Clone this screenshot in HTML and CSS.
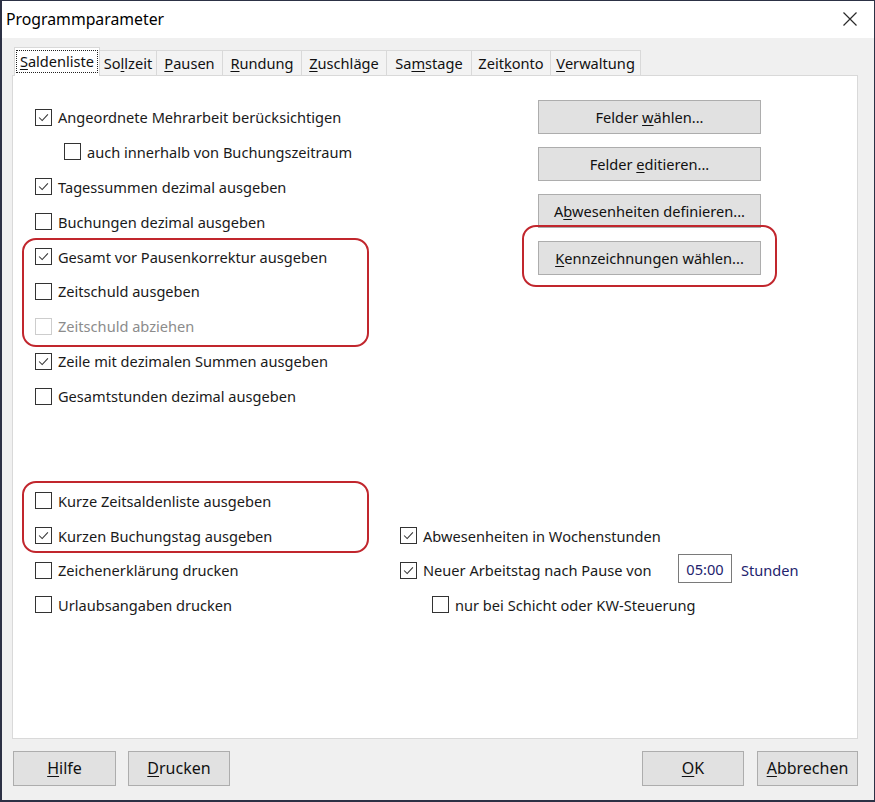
FILE: index.html
```html
<!DOCTYPE html>
<html lang="de">
<head>
<meta charset="utf-8">
<title>Programmparameter</title>
<link rel="stylesheet" href="styles.css">
</head>
<body>
<div class="window">
  <div class="titlebar">
    <span class="title">Programmparameter</span>
    <svg class="close" width="14" height="14" viewBox="0 0 14 14"><path d="M0.5 0.5 L13.5 13.5 M13.5 0.5 L0.5 13.5" stroke="#2a2a2a" stroke-width="1.2" fill="none"/></svg>
  </div>
  <div class="client">
    <div class="tabs">
      <div class="tab tab-active t-saldenliste"><span class="focus"><u>S</u>aldenliste</span></div>
      <div class="tab t-sollzeit">So<u>l</u>lzeit</div>
      <div class="tab t-pausen"><u>P</u>ausen</div>
      <div class="tab t-rundung"><u>R</u>undung</div>
      <div class="tab t-zuschlaege"><u>Z</u>uschläge</div>
      <div class="tab t-samstage">Sa<u>m</u>stage</div>
      <div class="tab t-zeitkonto">Zeit<u>k</u>onto</div>
      <div class="tab t-verwaltung"><u>V</u>erwaltung</div>
    </div>
    <div class="panel">
      <div class="top">
        <div class="list">
          <div class="row"><span class="cb checked"><svg viewBox="0 0 17 17"><path d="M3.5 8.5 L7 12 L13.5 5" /></svg></span>Angeordnete Mehrarbeit berücksichtigen</div>
          <div class="row sub"><span class="cb"></span>auch innerhalb von Buchungszeitraum</div>
          <div class="row"><span class="cb checked"><svg viewBox="0 0 17 17"><path d="M3.5 8.5 L7 12 L13.5 5" /></svg></span>Tagessummen dezimal ausgeben</div>
          <div class="row"><span class="cb"></span>Buchungen dezimal ausgeben</div>
          <div class="mark mark-a">
            <div class="row"><span class="cb checked"><svg viewBox="0 0 17 17"><path d="M3.5 8.5 L7 12 L13.5 5" /></svg></span>Gesamt vor Pausenkorrektur ausgeben</div>
            <div class="row"><span class="cb"></span>Zeitschuld ausgeben</div>
            <div class="row disabled"><span class="cb"></span>Zeitschuld abziehen</div>
          </div>
          <div class="row"><span class="cb checked"><svg viewBox="0 0 17 17"><path d="M3.5 8.5 L7 12 L13.5 5" /></svg></span>Zeile mit dezimalen Summen ausgeben</div>
          <div class="row"><span class="cb"></span>Gesamtstunden dezimal ausgeben</div>
        </div>
        <div class="actions">
          <button class="btn">Felder <u>w</u>ählen...</button>
          <button class="btn">Felder <u>e</u>ditieren...</button>
          <button class="btn">A<u>b</u>wesenheiten definieren...</button>
          <div class="mark mark-btn"><button class="btn"><u>K</u>ennzeichnungen wählen...</button></div>
        </div>
      </div>
      <div class="bottom">
        <div class="list">
          <div class="mark mark-b">
            <div class="row"><span class="cb"></span>Kurze Zeitsaldenliste ausgeben</div>
            <div class="row"><span class="cb checked"><svg viewBox="0 0 17 17"><path d="M3.5 8.5 L7 12 L13.5 5" /></svg></span>Kurzen Buchungstag ausgeben</div>
          </div>
          <div class="row"><span class="cb"></span>Zeichenerklärung drucken</div>
          <div class="row"><span class="cb"></span>Urlaubsangaben drucken</div>
        </div>
        <div class="list">
          <div class="row"></div>
          <div class="row"><span class="cb checked"><svg viewBox="0 0 17 17"><path d="M3.5 8.5 L7 12 L13.5 5" /></svg></span>Abwesenheiten in Wochenstunden</div>
          <div class="row"><span class="cb checked"><svg viewBox="0 0 17 17"><path d="M3.5 8.5 L7 12 L13.5 5" /></svg></span><span class="lbl-fixed">Neuer Arbeitstag nach Pause von</span><span class="field">05:00</span><span class="unit">Stunden</span></div>
          <div class="row sub2"><span class="cb"></span>nur bei Schicht oder KW-Steuerung</div>
        </div>
      </div>
    </div>
    <div class="footer">
      <button class="btn fbtn"><u>H</u>ilfe</button>
      <button class="btn fbtn"><u>D</u>rucken</button>
      <span class="spacer"></span>
      <button class="btn fbtn"><u>O</u>K</button>
      <button class="btn fbtn"><u>A</u>bbrechen</button>
    </div>
  </div>
</div>
</body>
</html>
```
FILE: styles.css
```css
* { box-sizing: border-box; }
html, body { margin: 0; padding: 0; }
body {
  font-family: "Noto Sans", "Open Sans", sans-serif;
  font-size: 14.6px;
  color: #1a1a1a;
  background: #f0f0f0;
}
u { text-decoration: underline; text-underline-offset: 2px; text-decoration-thickness: 1px; }

.window {
  width: 875px;
  height: 802px;
  border: 1px solid #2c3145;
  border-left-width: 2px;
  border-bottom-width: 2px;
  display: flex;
  flex-direction: column;
  background: #f0f0f0;
}

.titlebar {
  height: 37px;
  background: #ffffff;
  display: flex;
  align-items: center;
  padding-left: 4px;
  padding-right: 17px;
  flex: none;
}
.title { font-size: 15.8px; color: #000; flex: 1; padding-bottom: 1px; }
.close { display: block; margin-top: -1px; }

.client {
  flex: 1;
  display: flex;
  flex-direction: column;
  padding: 9px 16px 0 10px;
}

.tabs {
  display: flex;
  align-items: flex-end;
  height: 28px;
  padding-left: 2px;
  position: relative;
  z-index: 1;
}
.tab {
  height: 25px;
  background: #f3f3f3;
  border: 1px solid #d9d9d9;
  border-bottom: none;
  border-left: none;
  display: flex;
  align-items: center;
  justify-content: center;
  padding-bottom: 1px;
  color: #111;
}
.tab-active {
  height: 29px;
  margin-bottom: -1px;
  background: #ffffff;
  border-left: 1px solid #d9d9d9;
  align-items: flex-start;
  padding-top: 2px;
}
.focus {
  display: block;
  width: 82px;
  height: 23px;
  border: 1px dotted #222;
  text-align: center;
  line-height: 20px;
}
.t-saldenliste { width: 86px; }
.t-sollzeit { width: 57px; }
.t-pausen { width: 66px; }
.t-rundung { width: 79px; }
.t-zuschlaege { width: 85px; }
.t-samstage { width: 85px; }
.t-zeitkonto { width: 79px; }
.t-verwaltung { width: 90px; }

.panel {
  height: 664px;
  background: #ffffff;
  border: 1px solid #d9d9d9;
  flex: none;
  padding-top: 23.6px;
}

.top {
  display: flex;
}
.top .list { flex: 1; padding-left: 22px; }
.actions {
  width: 223px;
  margin-right: 96px;
  display: flex;
  flex-direction: column;
  gap: 13px;
}
.actions .btn { width: 223px; height: 34px; line-height: 32px; }

.list { display: flex; flex-direction: column; }
.row {
  height: 34.875px;
  display: flex;
  align-items: center;
  white-space: nowrap;
}
.row.sub { padding-left: 29px; }
.row.sub2 { padding-left: 32px; }
.row.disabled { color: #8c8c8c; }
.row.disabled .cb { border-color: #cdcdcd; }

.cb {
  width: 17px;
  height: 17px;
  border: 1px solid #333333;
  background: #fff;
  margin-right: 6px;
  flex: none;
  display: block;
}
.cb svg { display: block; width: 15px; height: 15px; }
.cb svg path { fill: none; stroke: #333; stroke-width: 1.2; }

.mark { position: relative; }
.mark::after {
  content: "";
  position: absolute;
  border: 2.8px solid #c1262d;
  border-radius: 14px;
  pointer-events: none;
}
.mark-a::after { left: -13px; width: 343px; top: -1px; bottom: -3px; }
.mark-b::after { left: -13px; width: 343px; top: -2px; bottom: 0px; }
.mark-btn::after { left: -16px; right: -16px; top: -16px; bottom: -12px; }

.bottom {
  display: grid;
  grid-template-columns: 365px 1fr;
  padding-left: 22px;
  margin-top: 70px;
}
.bottom .row { height: 34.7px; }

.lbl-fixed { width: 255px; display: inline-block; }
.field {
  width: 54px;
  height: 29px;
  border: 1px solid #7a7a7a;
  color: #23236e;
  display: flex;
  align-items: center;
  justify-content: center;
  margin-top: -3px;
}
.unit { color: #23236e; margin-left: 9px; margin-top: -1px; }

.btn {
  font-family: "Noto Sans", "Open Sans", sans-serif;
  font-size: 14.6px;
  color: #111;
  background: #e1e1e1;
  border: 1px solid #adadad;
  padding: 0;
  margin: 0;
  display: block;
  text-align: center;
  white-space: nowrap;
}

.footer {
  display: flex;
  padding-top: 12px;
  padding-left: 1px;
  gap: 12px;
}
.spacer { flex: 1; }
.fbtn { height: 35px; width: 103px; font-size: 16px; line-height: 33px; }
.footer .fbtn:nth-child(2) { width: 102px; }
.footer .fbtn:nth-child(4) { width: 102px; margin-right: 1px; }
.footer .fbtn:nth-child(5) { width: 101px; }
```
